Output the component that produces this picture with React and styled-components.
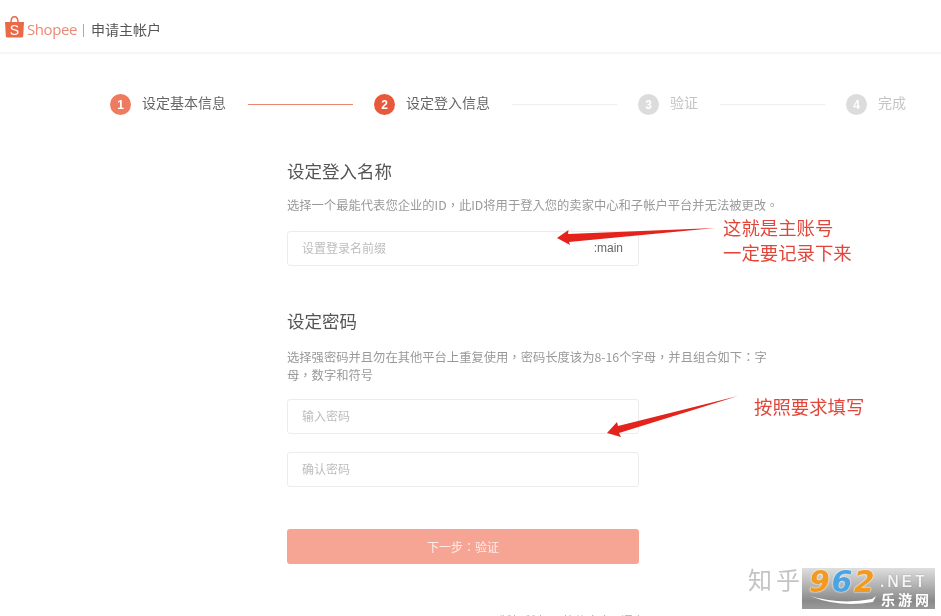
import styled, { createGlobalStyle } from "styled-components";

const GlobalStyle = createGlobalStyle`
  html, body {
    margin: 0;
    padding: 0;
    background: #fff;
  }
`;

const Page = styled.div`
  position: relative;
  width: 941px;
  height: 616px;
  overflow: hidden;
  background: #fff;
  font-family: "Noto Sans CJK SC", "Liberation Sans", sans-serif;
  filter: blur(0.35px);
`;

const Header = styled.header`
  display: flex;
  align-items: center;
  height: 46px;
  padding: 6px 0 0 5px;
  border-bottom: 2px solid #f6f6f6;
`;

const LogoBag = styled.svg`
  margin-bottom: 4px;
`;

const Wordmark = styled.span`
  margin-left: 3px;
  font-family: "Open Sans", sans-serif;
  font-size: 15px;
  letter-spacing: -0.4px;
  color: #ea8a76;
`;

const HeaderDivider = styled.span`
  width: 1px;
  height: 13px;
  margin: 2px 7px 0 6px;
  background: #aaa;
`;

const HeaderTitle = styled.span`
  font-size: 14px;
  color: #555;
`;

const Stepper = styled.div`
  display: flex;
  align-items: center;
  gap: 21.5px;
  padding: 40px 0 0 110px;
`;

const Step = styled.div`
  display: flex;
  align-items: center;
  gap: 11px;
`;

const StepDot = styled.span`
  display: flex;
  align-items: center;
  justify-content: center;
  width: 21px;
  height: 21px;
  border-radius: 50%;
  font-family: "Liberation Sans", sans-serif;
  font-size: 12px;
  font-weight: 700;
  color: #fff;
  background: ${(props) => props.$color};
`;

const StepLabel = styled.span`
  margin-bottom: 4px;
  font-size: 14px;
  line-height: 17px;
  color: ${(props) => props.$color};
`;

const StepLine = styled.span`
  width: 105px;
  height: 1px;
  background: ${(props) => props.$color};
`;

const Form = styled.main`
  width: 482px;
  margin-left: 287px;
`;

const Section = styled.section`
  margin-top: ${(props) => props.$top}px;
`;

const Title = styled.h2`
  margin: 0 0 ${(props) => props.$gap}px;
  font-size: 17.5px;
  font-weight: 400;
  line-height: 24px;
  color: #555;
`;

const Hint = styled.p`
  margin: 0 0 ${(props) => props.$gap}px;
  font-family: "Noto Sans CJK TC", "Noto Sans CJK SC", sans-serif;
  font-size: 12.3px;
  line-height: 18px;
  color: #999;
  white-space: ${(props) => (props.$nowrap ? "nowrap" : "normal")};
`;

const Field = styled.div`
  display: flex;
  align-items: center;
  justify-content: space-between;
  box-sizing: border-box;
  width: 352px;
  height: 35px;
  margin-bottom: ${(props) => props.$bottom || 0}px;
  padding: 0 15px 2px 14px;
  border: 1px solid #ececec;
  border-radius: 3px;
  background: #fff;
`;

const Placeholder = styled.span`
  font-size: 12px;
  color: #bdbdbd;
`;

const Suffix = styled.span`
  font-family: "Liberation Sans", sans-serif;
  font-size: 12px;
  color: #666;
`;

const NextButton = styled.button`
  display: block;
  width: 352px;
  height: 35px;
  margin-top: 42px;
  padding: 0;
  border: 0;
  border-radius: 3px;
  font-family: "Noto Sans CJK TC", "Noto Sans CJK SC", sans-serif;
  font-size: 12px;
  color: #fdeee9;
  background: #f6a595;
`;

const Footer = styled.footer`
  display: flex;
  align-items: center;
  gap: 6px;
  margin: 48px 0 0 409px;
  font-size: 12px;
  color: #aaa;
`;

const Annotation = styled.div`
  position: absolute;
  left: ${(props) => props.$left}px;
  top: ${(props) => props.$top}px;
  font-size: 18.4px;
  line-height: 25px;
  color: #e2463a;
  white-space: nowrap;
`;

const ArrowLayer = styled.svg`
  position: absolute;
  left: 0;
  top: 0;
  pointer-events: none;
`;

const Zhihu = styled.div`
  position: absolute;
  left: 748px;
  top: 561px;
  font-size: 24px;
  line-height: 36px;
  letter-spacing: 4px;
  color: #c4c4c4;
  white-space: nowrap;
`;

const Badge = styled.div`
  position: absolute;
  left: 802px;
  top: 568px;
  width: 133px;
  height: 41px;
  background: linear-gradient(#dedede, #b0b0b0 45%, #8a8a8a 80%, #9a9a9a);
`;

const BadgeDigits = styled.span`
  position: absolute;
  left: 7px;
  top: 0;
  font-family: "DejaVu Sans", sans-serif;
  font-size: 30px;
  font-style: italic;
  font-weight: 700;
  line-height: 27px;
  letter-spacing: 1.5px;
  text-shadow: 0 0 1px #fff, 0 0 2px #fff;
`;

const Digit = styled.span`
  color: ${(props) => props.$color};
`;

const BadgeNet = styled.span`
  position: absolute;
  left: 78px;
  top: 5px;
  font-family: "Liberation Sans", sans-serif;
  font-size: 16px;
  font-weight: 700;
  line-height: 17px;
  letter-spacing: 2.8px;
  color: #f4f4f4;
  text-shadow: 0 0 1px #666;
`;

const BadgeName = styled.span`
  position: absolute;
  left: 79px;
  top: 23px;
  font-size: 14px;
  font-weight: 700;
  line-height: 17px;
  letter-spacing: 3px;
  color: #fff;
`;

const Swoosh = styled.svg`
  position: absolute;
  left: 8px;
  top: 27px;
`;

const ShopeeBag = () => (
  <LogoBag width="19" height="22" viewBox="0 0 19 22">
    <path d="M6 6.5 C6 1.8 8 0.7 9.5 0.7 C11 0.7 13 1.8 13 6.5" fill="none" stroke="#ea6a47" strokeWidth="1.5" />
    <path d="M0 6 H19 L18.2 20 Q18.1 21.5 16.6 21.5 H2.4 Q0.9 21.5 0.8 20 Z" fill="#ea6a47" />
    <text x="9.5" y="18.5" textAnchor="middle" fontFamily="Liberation Sans" fontSize="14" fill="#fff">S</text>
  </LogoBag>
);

const Arrows = () => (
  <ArrowLayer width="941" height="616" viewBox="0 0 941 616">
    <path d="M715 228 L568 234 L568.5 230 L557 238 L570 245 L569 242 Z" fill="#e3231c" />
    <path d="M738 396 L618 426 L617 422 L607 433 L621 437 L619 433 Z" fill="#e3231c" />
  </ArrowLayer>
);

export default function App() {
  return (
    <Page>
      <GlobalStyle />
      <Header>
        <ShopeeBag />
        <Wordmark>Shopee</Wordmark>
        <HeaderDivider />
        <HeaderTitle>申请主帐户</HeaderTitle>
      </Header>

      <Stepper>
        <Step>
          <StepDot $color="#ee7a5f">1</StepDot>
          <StepLabel $color="#666">设定基本信息</StepLabel>
        </Step>
        <StepLine $color="#e8866f" />
        <Step>
          <StepDot $color="#e8583a">2</StepDot>
          <StepLabel $color="#666">设定登入信息</StepLabel>
        </Step>
        <StepLine $color="#eeeeee" />
        <Step>
          <StepDot $color="#dcdcdc">3</StepDot>
          <StepLabel $color="#c4c4c4">验证</StepLabel>
        </Step>
        <StepLine $color="#eeeeee" />
        <Step>
          <StepDot $color="#dcdcdc">4</StepDot>
          <StepLabel $color="#c4c4c4">完成</StepLabel>
        </Step>
      </Stepper>

      <Form>
        <Section $top={44}>
          <Title $gap={13}>设定登入名称</Title>
          <Hint $gap={17} $nowrap>选择一个最能代表您企业的ID，此ID将用于登入您的卖家中心和子帐户平台并无法被更改。</Hint>
          <Field>
            <Placeholder>设置登录名前缀</Placeholder>
            <Suffix>:main</Suffix>
          </Field>
        </Section>
        <Section $top={43}>
          <Title $gap={15}>设定密码</Title>
          <Hint $gap={15}>选择强密码并且勿在其他平台上重复使用，密码长度该为8-16个字母，并且组合如下：字母，数字和符号</Hint>
          <Field $bottom={18}>
            <Placeholder>输入密码</Placeholder>
          </Field>
          <Field>
            <Placeholder>确认密码</Placeholder>
          </Field>
          <NextButton>下一步：验证</NextButton>
        </Section>
      </Form>

      <Footer>
        <span>© 2019 Shopee. 版权所有</span>
        <span>|</span>
        <span>简体中文 / 语言</span>
      </Footer>

      <Arrows />
      <Annotation $left={723} $top={215}>这就是主账号</Annotation>
      <Annotation $left={723} $top={240}>一定要记录下来</Annotation>
      <Annotation $left={754} $top={394}>按照要求填写</Annotation>

      <Zhihu>知乎</Zhihu>
      <Badge>
        <BadgeDigits>
          <Digit $color="#f29a1f">9</Digit>
          <Digit $color="#4ba4e2">6</Digit>
          <Digit $color="#f29a1f">2</Digit>
        </BadgeDigits>
        <Swoosh width="66" height="10" viewBox="0 0 66 10">
          <path d="M0 1 Q30 10 62 4 L66 1 L63 7 Q30 13 0 1 Z" fill="#fff" />
        </Swoosh>
        <BadgeNet>.NET</BadgeNet>
        <BadgeName>乐游网</BadgeName>
      </Badge>
    </Page>
  );
}
